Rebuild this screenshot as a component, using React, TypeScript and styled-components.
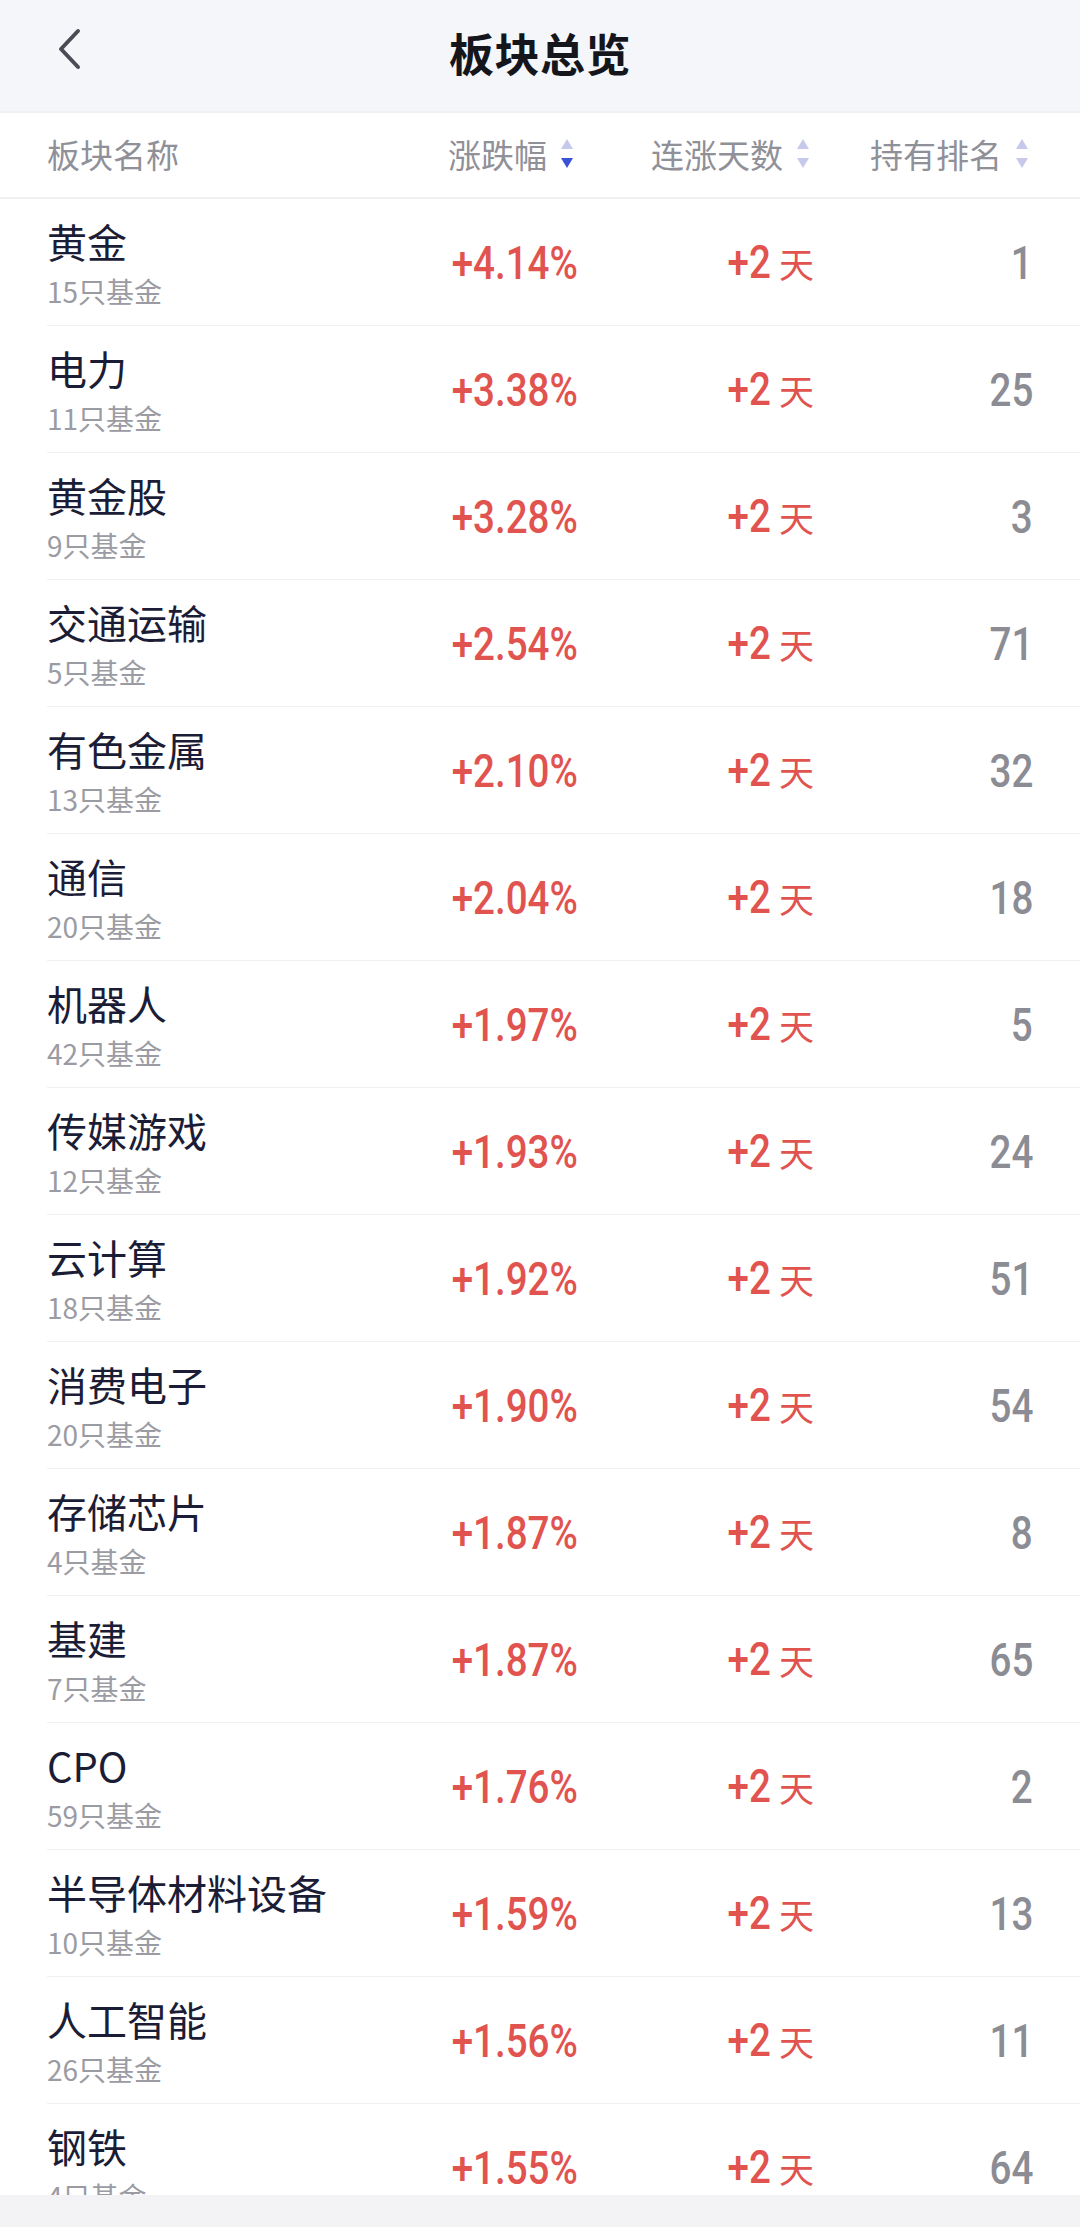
import styled, { createGlobalStyle } from 'styled-components';

const GlobalStyle = createGlobalStyle`
  html, body {
    margin: 0;
    padding: 0;
    background: #ffffff;
  }
  body {
    font-family: "Noto Sans CJK SC", "Noto Sans", sans-serif;
  }
`;

type Sector = { name: string; funds: number; pct: string; rank: number };

const sectors: Sector[] = [
  { name: '黄金', funds: 15, pct: '+4.14%', rank: 1 },
  { name: '电力', funds: 11, pct: '+3.38%', rank: 25 },
  { name: '黄金股', funds: 9, pct: '+3.28%', rank: 3 },
  { name: '交通运输', funds: 5, pct: '+2.54%', rank: 71 },
  { name: '有色金属', funds: 13, pct: '+2.10%', rank: 32 },
  { name: '通信', funds: 20, pct: '+2.04%', rank: 18 },
  { name: '机器人', funds: 42, pct: '+1.97%', rank: 5 },
  { name: '传媒游戏', funds: 12, pct: '+1.93%', rank: 24 },
  { name: '云计算', funds: 18, pct: '+1.92%', rank: 51 },
  { name: '消费电子', funds: 20, pct: '+1.90%', rank: 54 },
  { name: '存储芯片', funds: 4, pct: '+1.87%', rank: 8 },
  { name: '基建', funds: 7, pct: '+1.87%', rank: 65 },
  { name: 'CPO', funds: 59, pct: '+1.76%', rank: 2 },
  { name: '半导体材料设备', funds: 10, pct: '+1.59%', rank: 13 },
  { name: '人工智能', funds: 26, pct: '+1.56%', rank: 11 },
  { name: '钢铁', funds: 4, pct: '+1.55%', rank: 64 },
];

const Page = styled.div`
  display: flex;
  flex-direction: column;
  height: 100vh;
  overflow: hidden;
  background: #ffffff;
`;

const NavBar = styled.header`
  position: relative;
  flex: 0 0 111px;
  display: flex;
  align-items: center;
  justify-content: center;
  background: #f5f6fa;
  border-bottom: 2px solid #eff0f4;
`;

const BackButton = styled.button`
  position: absolute;
  left: 50px;
  top: 22px;
  width: 40px;
  height: 54px;
  padding: 0;
  border: none;
  background: transparent;
  display: flex;
  align-items: center;
  justify-content: center;
`;

const Title = styled.h1`
  margin: 0 0 6px;
  font-size: 45px;
  font-weight: 700;
  color: #15161b;
  letter-spacing: 0.5px;
`;

const Grid = styled.div`
  display: grid;
  grid-template-columns: 1fr 178px 236px 219px;
  align-items: center;
  padding: 0 47px;
`;

const HeadRow = styled(Grid)`
  flex: 0 0 84px;
  border-bottom: 2px solid #efeff2;
`;

const HeadCell = styled.div<{ $right?: boolean }>`
  display: flex;
  align-items: center;
  justify-content: ${(p) => (p.$right ? 'flex-end' : 'flex-start')};
  gap: 14px;
  font-size: 33px;
  color: #8f9098;
  margin-top: -3px;
`;

const SortIcon = styled.span`
  display: flex;
  flex-direction: column;
  gap: 9px;
  margin-right: 5px;
`;

const Tri = styled.span<{ $dir: 'up' | 'down'; $active?: boolean }>`
  width: 0;
  height: 0;
  border-left: 6px solid transparent;
  border-right: 6px solid transparent;
  ${(p) =>
    p.$dir === 'up'
      ? `border-bottom: 10px solid ${p.$active ? '#3b52d6' : '#c6c9ec'};`
      : `border-top: 10px solid ${p.$active ? '#3b52d6' : '#c6c9ec'};`}
`;

const List = styled.div`
  flex: 1;
  overflow: hidden;
`;

const Row = styled(Grid)`
  position: relative;
  height: 126px;
  &::after {
    content: '';
    position: absolute;
    left: 47px;
    right: 0;
    bottom: -1px;
    height: 1px;
    background: #eff0f3;
  }
  & + & {
    margin-top: 1px;
  }
`;

const NameBox = styled.div`
  display: flex;
  flex-direction: column;
  margin-top: 2px;
`;

const Name = styled.div`
  font-size: 40px;
  line-height: 46px;
  color: #1b1d36;
`;

const Funds = styled.div`
  font-size: 28px;
  line-height: 34px;
  margin-top: 10px;
  color: #9a9ba3;
`;

const NumCell = styled.div`
  display: flex;
  justify-content: flex-end;
  align-items: baseline;
`;

const Num = styled.span<{ $muted?: boolean }>`
  display: inline-block;
  font-family: Roboto, "Liberation Sans", sans-serif;
  font-size: 47px;
  font-weight: 500;
  line-height: 1;
  color: ${(p) => (p.$muted ? '#8b8c94' : '#e1534f')};
  transform: scaleX(0.82);
  transform-origin: right center;
`;

const DayUnit = styled.span`
  font-size: 35px;
  color: #e1534f;
  margin-left: 8px;
`;

const BottomBar = styled.div`
  flex: 0 0 32px;
  background: #f3f3f5;
`;

const SortHead = ({ label, active }: { label: string; active?: boolean }) => (
  <HeadCell $right>
    {label}
    <SortIcon>
      <Tri $dir="up" />
      <Tri $dir="down" $active={active} />
    </SortIcon>
  </HeadCell>
);

export default function App() {
  return (
    <>
      <GlobalStyle />
      <Page>
        <NavBar>
          <BackButton aria-label="返回">
            <svg width="26" height="42" viewBox="0 0 26 42" fill="none">
              <path
                d="M21 3 L4 21 L21 39"
                stroke="#4a4b55"
                strokeWidth="4"
                strokeLinecap="round"
                strokeLinejoin="round"
              />
            </svg>
          </BackButton>
          <Title>板块总览</Title>
        </NavBar>
        <HeadRow>
          <HeadCell>板块名称</HeadCell>
          <SortHead label="涨跌幅" active />
          <SortHead label="连涨天数" />
          <SortHead label="持有排名" />
        </HeadRow>
        <List>
          {sectors.map((s) => (
            <Row key={s.name}>
              <NameBox>
                <Name>{s.name}</Name>
                <Funds>{s.funds}只基金</Funds>
              </NameBox>
              <NumCell>
                <Num>{s.pct}</Num>
              </NumCell>
              <NumCell>
                <Num>+2</Num>
                <DayUnit>天</DayUnit>
              </NumCell>
              <NumCell>
                <Num $muted>{s.rank}</Num>
              </NumCell>
            </Row>
          ))}
        </List>
        <BottomBar />
      </Page>
    </>
  );
}
